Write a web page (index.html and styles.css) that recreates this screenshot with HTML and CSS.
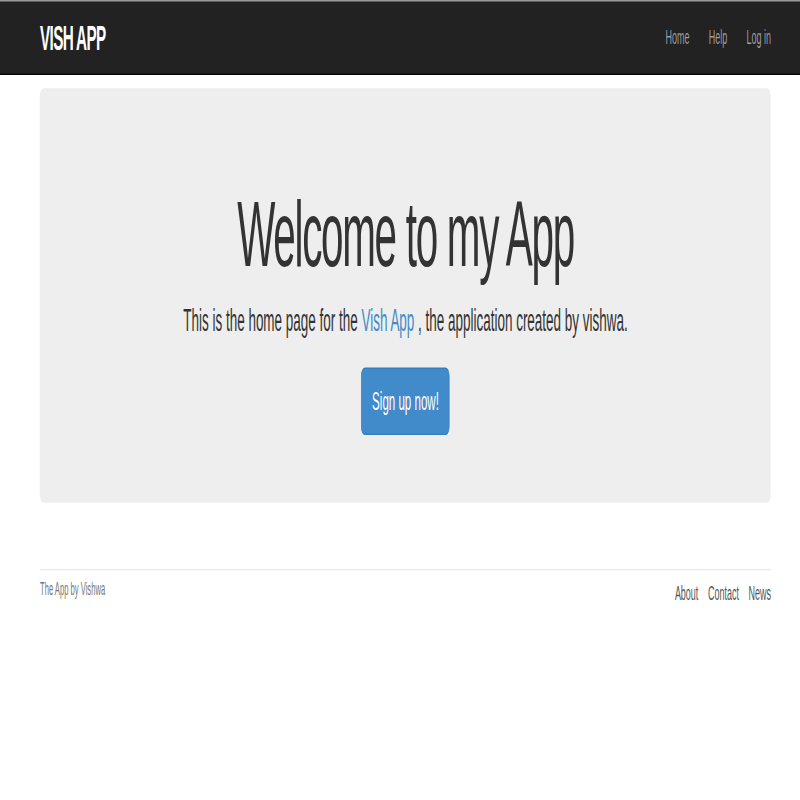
FILE: index.html
```
<!DOCTYPE html>
<html lang="en">
<head>
<meta charset="utf-8">
<title>Vish App</title>
<link rel="stylesheet" href="styles.css">
</head>
<body>
<div class="viewport">
<div class="page">
  <header class="navbar">
    <div class="container navbar-inner">
      <a class="logo" href="#">vish app</a>
      <nav>
        <ul class="nav">
          <li><a href="#">Home</a></li>
          <li><a href="#">Help</a></li>
          <li><a href="#">Log in</a></li>
        </ul>
      </nav>
    </div>
  </header>
  <div class="container main">
    <div class="jumbotron">
      <h1>Welcome to my App</h1>
      <h2>This is the home page for the <a href="#">Vish App</a> , the application created by vishwa.</h2>
      <a class="btn" href="#">Sign up now!</a>
    </div>
    <footer class="footer">
      <small>The App by Vishwa</small>
      <ul class="footer-links">
        <li><a href="#">About</a></li>
        <li><a href="#">Contact</a></li>
        <li><a href="#">News</a></li>
      </ul>
    </footer>
  </div>
</div>
</div>
</body>
</html>
```
FILE: styles.css
```
html, body {
  margin: 0;
  padding: 0;
  background: #fff;
}
body {
  font-family: "Liberation Sans", Arial, sans-serif;
  font-size: 14px;
  line-height: 1.42857;
  color: #333;
}
a { text-decoration: none; }

/* the reference is a squashed screenshot: lay out at original size, then scale */
.viewport {
  width: 800px;
  height: 800px;
  overflow: hidden;
}
.page {
  width: 1248px;
  height: 544px;
  transform: scale(0.6412, 1.47);
  transform-origin: 0 0;
}
.container {
  width: 1140px;
  margin-left: 62.4px;
}

.navbar {
  height: 50px;
  background: #222;
  border-bottom: 1px solid #080808;
  box-shadow: inset 0 1px 0 #9a9a9a;
}
.navbar-inner {
  display: flex;
  justify-content: space-between;
  align-items: flex-start;
}
.logo {
  padding-top: 9px;
  font-size: 23.8px;
  line-height: 34px;
  font-weight: bold;
  text-transform: uppercase;
  letter-spacing: -1px;
  color: #fff;
}
.nav {
  display: flex;
  list-style: none;
  margin: 0 -15px 0 0;
  padding: 0;
}
.nav a {
  display: block;
  padding: 15px;
  line-height: 20px;
  color: #9d9d9d;
}

.main {
  padding-top: 9px;
}
.jumbotron {
  background: #eee;
  border-radius: 6px;
  padding: 48px 60px 46.5px;
  text-align: center;
}
.jumbotron h1 {
  font-size: 63px;
  line-height: 1;
  letter-spacing: -2px;
  font-weight: normal;
  margin: 20px 0 16px;
  color: #333;
}
.jumbotron h2 {
  font-size: 21px;
  line-height: 1;
  font-weight: normal;
  margin: 0 0 21.8px;
  color: #333;
}
.jumbotron h2 a { color: #428bca; }
.btn {
  display: block;
  width: fit-content;
  margin: 0 auto;
  padding: 10px 16px;
  font-size: 18px;
  line-height: 24px;
  border-radius: 6px;
  background: #428bca;
  border: 1px solid #357ebd;
  color: #fff;
}

.footer {
  margin-top: 45px;
  padding-top: 5px;
  border-top: 1px solid #eaeaea;
  color: #777;
  display: flex;
  justify-content: space-between;
  align-items: flex-start;
}
.footer small {
  font-size: 85%;
  line-height: 1.42857;
}
.footer-links {
  display: flex;
  list-style: none;
  margin: 1px 0 0;
  padding: 0;
}
.footer-links li { margin-left: 15px; }
.footer-links a { color: #555; }
```
